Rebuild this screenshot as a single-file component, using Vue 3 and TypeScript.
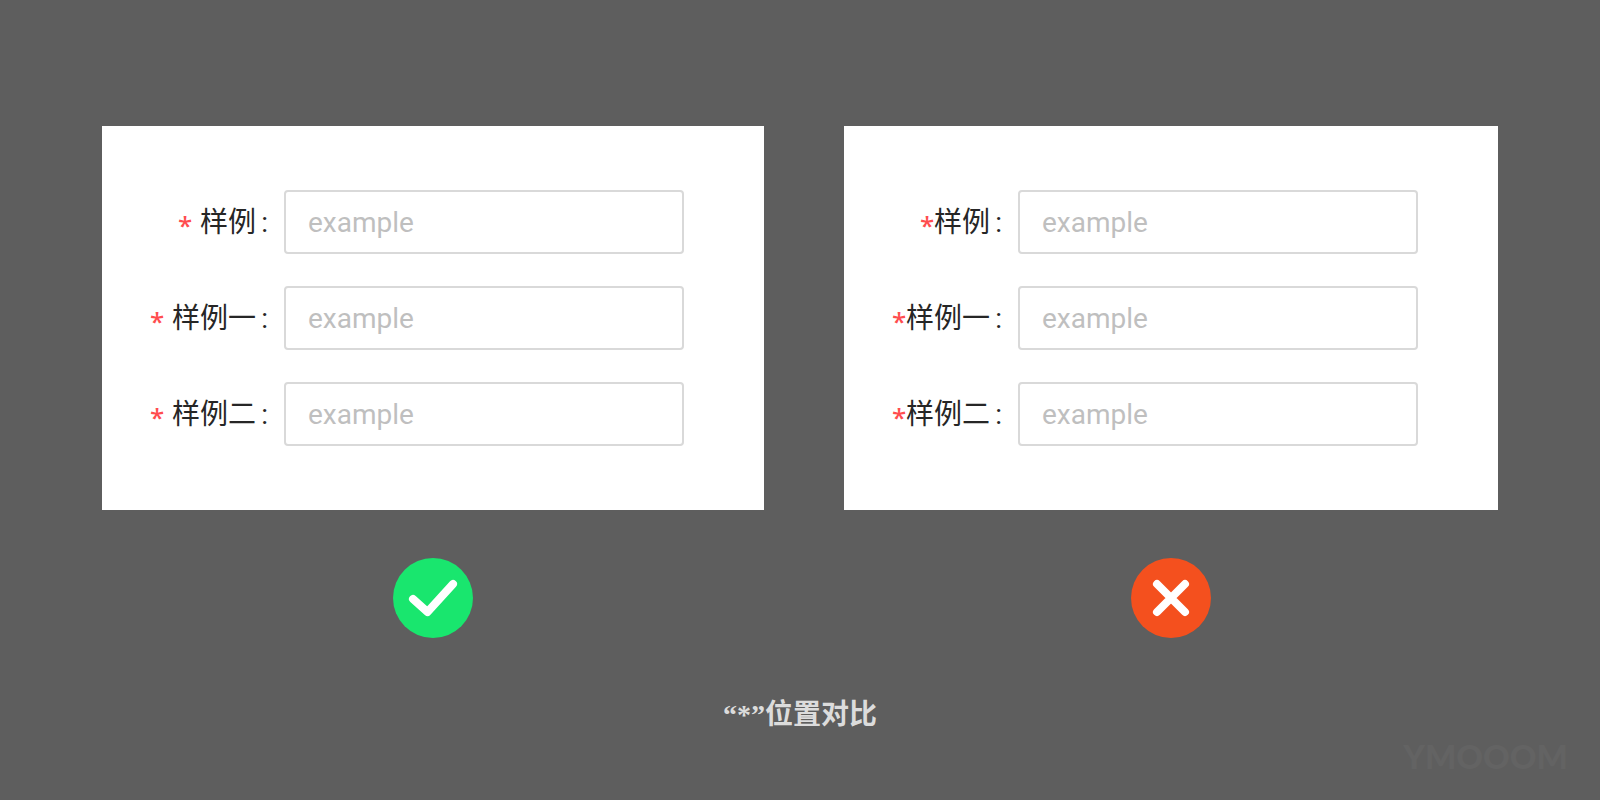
<script setup lang="ts">
interface Example {
  id: string
  spaced: boolean
  correct: boolean
}

const examples: Example[] = [
  { id: 'good', spaced: true, correct: true },
  { id: 'bad', spaced: false, correct: false },
]
const fields: string[] = ['样例', '样例一', '样例二']
</script>

<template>
  <main class="page">
    <div class="examples">
      <section v-for="example in examples" :key="example.id" class="example">
        <form class="card" @submit.prevent>
          <div v-for="(field, index) in fields" :key="field" class="row">
            <label
              class="label"
              :class="{ spaced: example.spaced }"
              :for="`${example.id}-${index}`"
            >
              <span class="star">*</span>
              <span>{{ field }}</span>
              <span class="colon">:</span>
            </label>
            <input
              :id="`${example.id}-${index}`"
              class="input"
              type="text"
              placeholder="example"
            />
          </div>
        </form>
        <svg v-if="example.correct" class="mark" viewBox="0 0 80 80" aria-hidden="true">
          <circle cx="40" cy="40" r="40" fill="#19e66e" />
          <path d="M20 41 L34.5 54 L60 26" />
        </svg>
        <svg v-else class="mark" viewBox="0 0 80 80" aria-hidden="true">
          <circle cx="40" cy="40" r="40" fill="#f4501e" />
          <path d="M26 26 L54 54 M54 26 L26 54" />
        </svg>
      </section>
    </div>
    <p class="caption"><span class="quoted">“*”</span>位置对比</p>
    <div class="brand">YMOOOM</div>
  </main>
</template>

<style>
body {
  margin: 0;
  background: #5e5e5e;
}
</style>

<style scoped>
.page {
  position: relative;
  box-sizing: border-box;
  min-height: 100vh;
  padding: 126px 102px 64px;
  background: #5e5e5e;
  font-family: Roboto, "Noto Sans CJK SC", sans-serif;
  font-size: 28px;
}

.examples {
  display: grid;
  grid-template-columns: 662fr 654fr;
  gap: 80px;
}

.example {
  display: flex;
  flex-direction: column;
  align-items: center;
  gap: 48px;
}

.card {
  box-sizing: border-box;
  display: flex;
  flex-direction: column;
  gap: 32px;
  width: 100%;
  padding: 64px 80px 64px 32px;
  background: #fff;
}

.row {
  display: flex;
  align-items: center;
}

.label {
  display: flex;
  flex: 1;
  justify-content: flex-end;
  align-items: center;
  padding: 2px 16px 0 0;
  color: #262626;
  line-height: 40px;
  white-space: nowrap;
}

.star {
  width: 14px;
  padding-top: 4px;
  color: #ff4d4f;
  font-family: "Noto Sans", sans-serif;
  font-size: 26px;
  font-weight: 500;
  text-align: center;
}

.spaced .star {
  margin-right: 8px;
}

.colon {
  width: 8px;
  margin-left: 4px;
  text-align: right;
}

.input {
  box-sizing: border-box;
  width: 400px;
  height: 64px;
  padding: 0 22px;
  border: 2px solid #d9d9d9;
  border-radius: 4px;
  background: #fff;
  color: #262626;
  font-family: Roboto, sans-serif;
  font-size: 28px;
  outline: none;
}

.input::placeholder {
  color: #bfbfbf;
  opacity: 1;
}

.mark {
  width: 80px;
  height: 80px;
}

.mark path {
  fill: none;
  stroke: #fff;
  stroke-width: 8;
  stroke-linecap: round;
  stroke-linejoin: round;
}

.caption {
  margin: 54px 0 0;
  color: #dcdcdc;
  font-family: "Noto Sans CJK SC", sans-serif;
  font-weight: 700;
  line-height: 40px;
  text-align: center;
}

.quoted {
  font-family: "Liberation Serif", serif;
}

.brand {
  position: absolute;
  right: 32px;
  bottom: 24px;
  color: #636363;
  font-family: Lato, sans-serif;
  font-size: 33px;
  font-weight: 900;
  line-height: 40px;
}
</style>
